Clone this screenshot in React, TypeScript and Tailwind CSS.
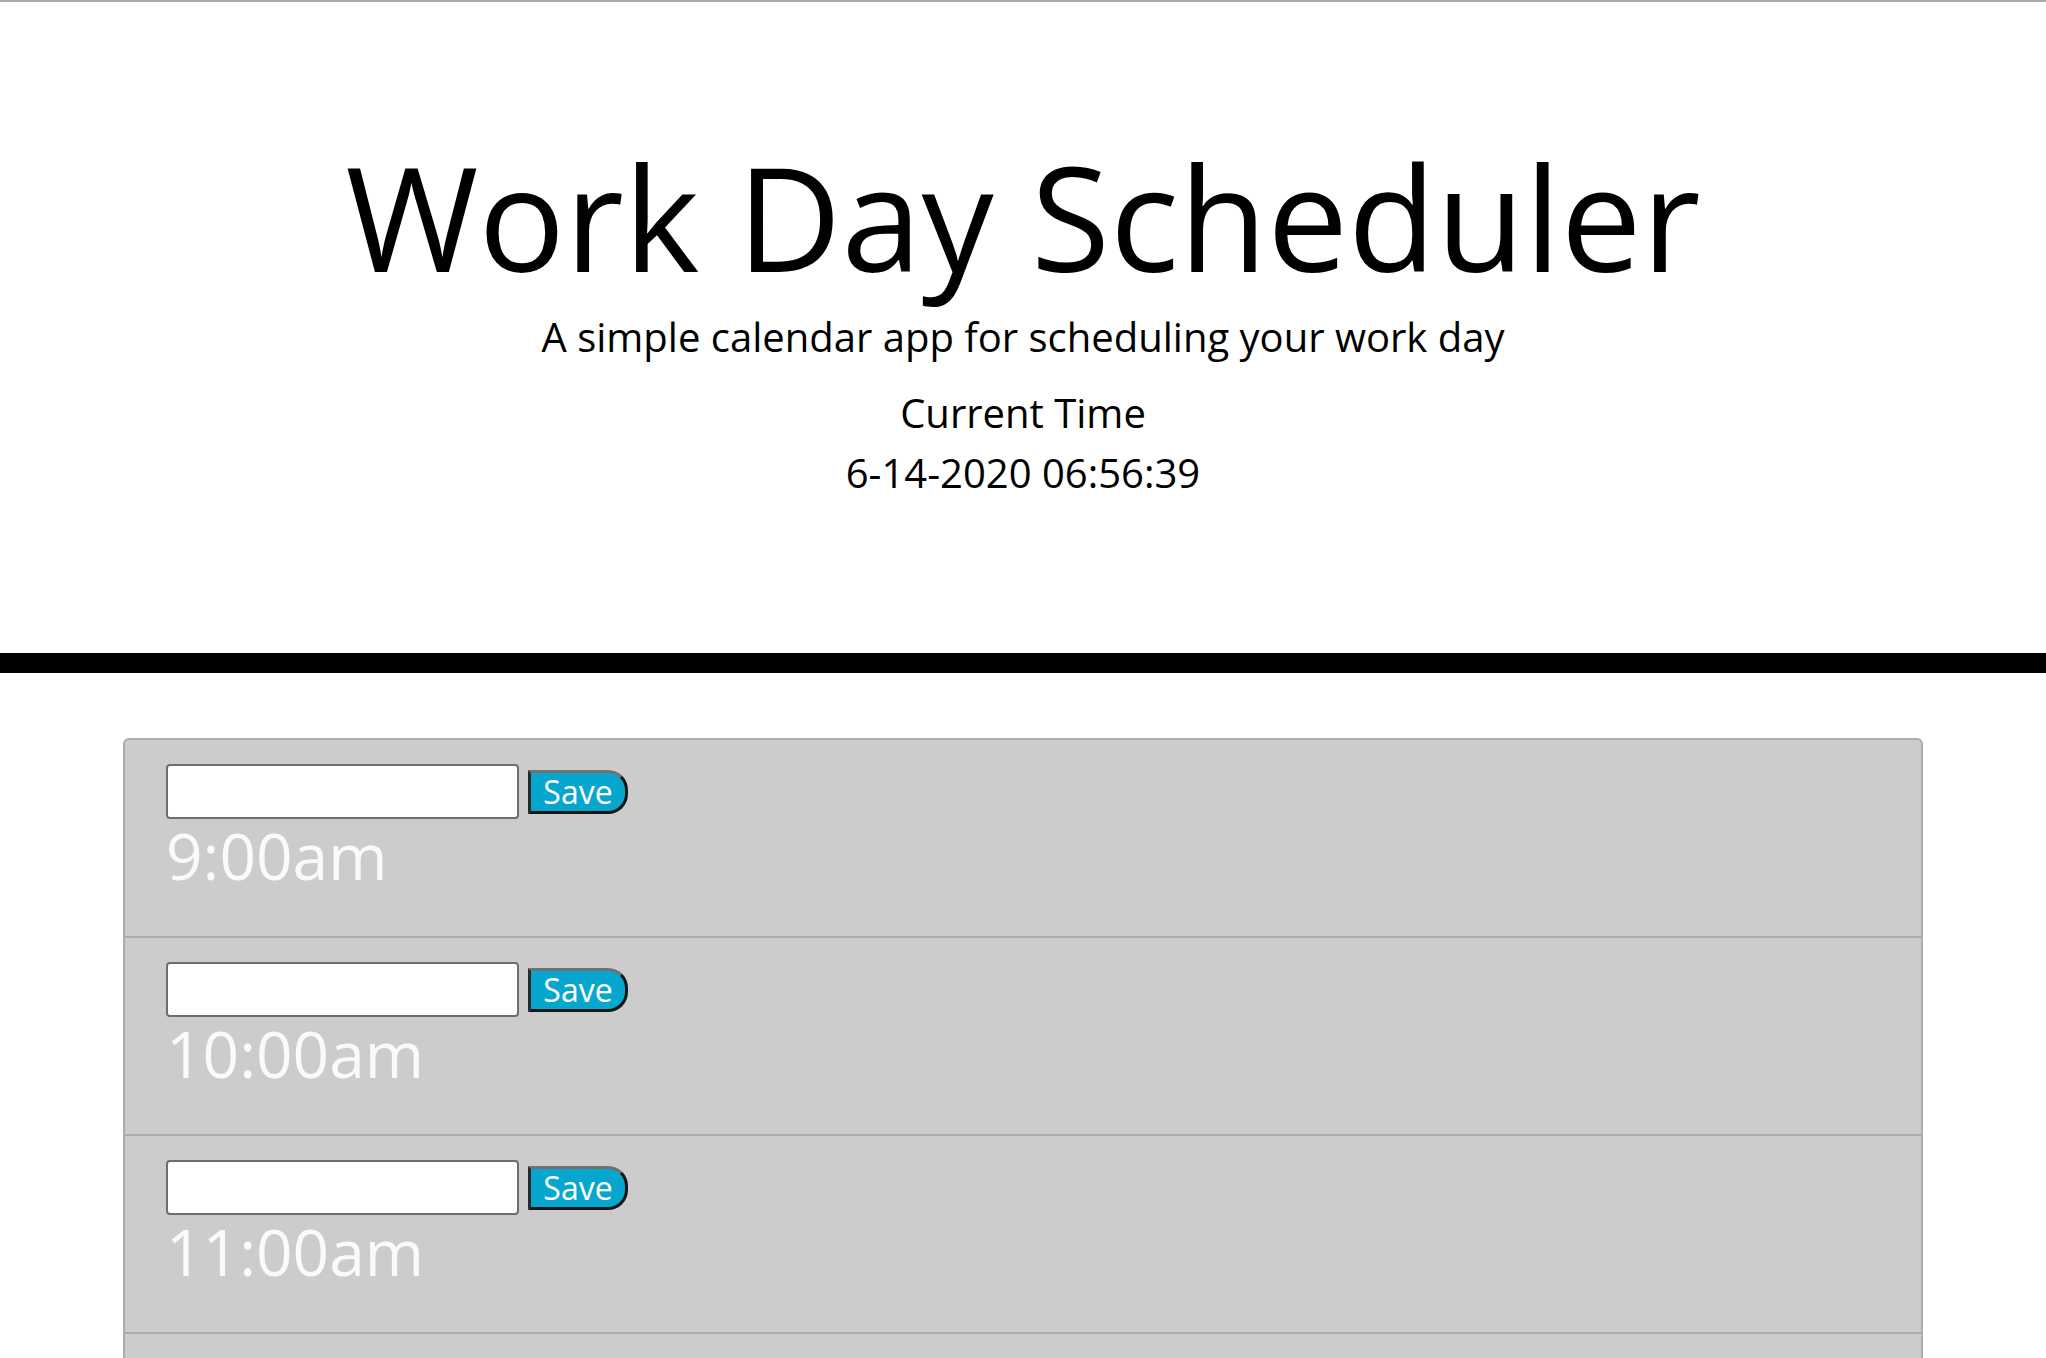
const hours = ['9:00am', '10:00am', '11:00am', '12:00pm', '1:00pm', '2:00pm', '3:00pm', '4:00pm', '5:00pm'];

function HourRow({ label }: { label: string }) {
  return (
    <div className="h-[198px] border-b-2 border-[#adadad] pl-[41px] pt-[24px]">
      <div className="flex items-center">
        <input
          type="text"
          className="h-[55px] w-[353px] rounded-[4px] border-2 border-[#6e6e6e] bg-white px-2 text-[24px] outline-none"
        />
        <button
          type="button"
          className="ml-[9px] flex h-[44px] w-[100px] items-center justify-center rounded-r-[20px] border-[3px] border-t-[#707070] border-l-[#2a2a2a] border-r-[#151515] border-b-[#151515] bg-[#07a6cf] text-[32px] leading-none text-white"
        >
          Save
        </button>
      </div>
      <div className="mt-[5px] text-[64px] leading-none text-[#fafafa]">{label}</div>
    </div>
  );
}

export default function App() {
  return (
    <div className="min-h-screen border-t-2 border-[#a9a9a9] bg-white font-['Open_Sans',sans-serif] text-black">
      <header className="pt-[128px] text-center">
        <h1 className="text-[144px] font-normal leading-[172px]">Work Day Scheduler</h1>
        <p className="mt-[5px] text-[40px] leading-[60px]">A simple calendar app for scheduling your work day</p>
        <p className="mt-[16px] text-[40px] leading-[60px]">Current Time</p>
        <p className="text-[40px] leading-[60px]">6-14-2020 06:56:39</p>
      </header>

      <div className="mt-[150px] h-[20px] bg-black" />

      <main className="mx-auto mt-[65px] w-[1800px] overflow-hidden rounded-t-[6px] border-2 border-b-0 border-[#adadad] bg-[#cccccc]">
        {hours.map((h) => (
          <HourRow key={h} label={h} />
        ))}
      </main>
    </div>
  );
}
